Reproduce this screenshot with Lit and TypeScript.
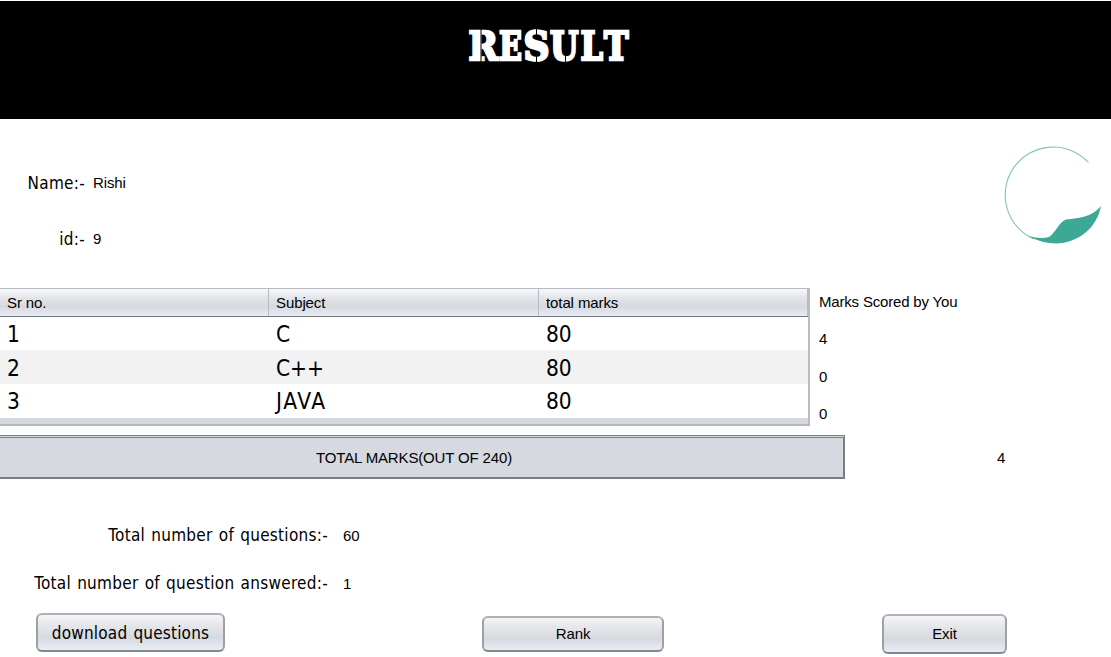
import { LitElement, html, css, svg } from "lit";
import { customElement } from "lit/decorators.js";

// Each heading letter: glyph, left edge, drawn width.
const LETTERS: [string, number, number][] = [
  ["R", 1.5, 29.5],
  ["E", 32, 23],
  ["S", 56.5, 26],
  ["U", 83, 28.5],
  ["L", 113.5, 22.5],
  ["T", 137, 24.5],
];

@customElement("app-root")
export class AppRoot extends LitElement {
  static styles = css`
    :host {
      display: block;
      box-sizing: border-box;
      width: 1111px;
      height: 657px;
      padding-top: 1px;
      overflow: hidden;
      background: #fff;
      color: #000;
      font: 15px/20px "Liberation Sans", Arial, sans-serif;
      white-space: nowrap;
    }
    * { box-sizing: border-box; }
    .banner { height: 118px; background: #000; padding: 22px 0 0 467px; }
    .title { display: block; font: bold 39.5px "DejaVu Serif", serif; }
    .tahoma {
      font-family: "DejaVu Sans Condensed", "DejaVu Sans", sans-serif;
      font-stretch: condensed;
      font-size: 17px;
      letter-spacing: 0.28px;
      word-spacing: 1px;
    }
    .info { display: flex; justify-content: space-between; height: 169px; }
    .person { padding-top: 54px; }
    .line { display: grid; grid-template-columns: 85px auto; column-gap: 8px; height: 56px; }
    .line > :first-child, .count > :first-child { justify-self: end; }
    .line > :last-child { letter-spacing: -0.1px; }
    .logo { margin: 20px 6px 0 0; }
    .marks { display: flex; height: 147px; }
    .table {
      width: 810px; height: 138px; background: #d6d9df;
      border: 2px solid #b9bcc2; border-left: 0; border-top-color: #b7bac0;
      border-top-width: 1px; border-bottom-color: #b4b7bd;
    }
    .row { display: grid; grid-template-columns: 269px 270px 1fr; height: 34px; background: #fff; }
    .row > span { padding-left: 7px; line-height: 35px; font-size: 22.5px; letter-spacing: -0.1px; }
    .row:nth-child(2) { height: 33px; }
    .row:nth-child(3) { background: #f2f2f2; }
    .row:nth-child(3) > span { line-height: 37px; }
    .row:nth-child(4) > span { line-height: 35px; }
    .row:nth-child(4) > .code { letter-spacing: 1.6px; }
    .row.head {
      height: 28px; border-bottom: 1px solid #747980;
      background: linear-gradient(#f7f8fa 0, #e2e4e9 35%, #d6d9df 65%, #e9ecf3 100%);
    }
    .head > span { font-size: 15px; line-height: 27px; border-right: 1px solid #b8bbc1; letter-spacing: -0.1px; }
    .scores { padding: 4px 0 0 9px; letter-spacing: -0.18px; }
    .scores > div { height: 37.4px; }
    .total { display: flex; height: 44px; }
    .sum {
      width: 845px; border: 3px double #7b7e7d; border-width: 3px 2px 2px 0;
      border-right-style: solid; border-bottom-style: solid;
      background: #d6d9df; padding: 10px 0 0 316px; letter-spacing: -0.15px;
    }
    .value { padding: 13px 0 0 152px; }
    .counts { padding-top: 46px; height: 134px; }
    .count { display: grid; grid-template-columns: 328px auto; column-gap: 15px; height: 48px; }
    .count > :last-child { padding-top: 1px; }
    .actions { display: flex; align-items: flex-start; }
    button {
      margin: 0; padding: 0; color: #000; font: inherit; letter-spacing: -0.1px;
      border: 2px solid #9da0a6;
      border-top-color: #b0b2b7; border-bottom-color: #84878d; border-radius: 6px;
      background: linear-gradient(#f4f5f7 0, #e4e6ea 30%, #d6d9df 65%, #e9edf5 100%);
    }
    button.download {
      width: 189px; height: 39px; margin-left: 36px;
      font-family: "DejaVu Sans Condensed", "DejaVu Sans", sans-serif;
      font-stretch: condensed; font-size: 17px; letter-spacing: 0.2px; word-spacing: 1px;
    }
    .rank { width: 182px; height: 36px; margin: 3px 0 0 257px; }
    .exit { width: 125px; height: 40px; margin: 1px 0 0 218px; }
  `;

  render() {
    const rows = [["1", "C", "80"], ["2", "C++", "80"], ["3", "JAVA", "80"]];
    return html`
      <div class="banner"><svg class="title" width="166" height="50" aria-label="RESULT">
        ${LETTERS.map(([c, x, w]) => svg`<text x=${x} y="37" textLength=${w} lengthAdjust="spacingAndGlyphs"
          fill="#fff" stroke="#fff" stroke-width="2.6">${c}</text>`)}
        <path d="M14 5V40M69.5 5V12M69.5 33V41M98.5 33V41" stroke="#000" stroke-width="1"/>
      </svg></div>
      <div class="info">
        <div class="person">
          <div class="line"><span class="tahoma">Name:-</span><span>Rishi</span></div>
          <div class="line"><span class="tahoma">id:-</span><span>9</span></div>
        </div>
        <svg class="logo" width="110" height="110" viewBox="995 139 110 110">
          <path d="M1088.5 162.5A48 48 0 1 0 1034 239" fill="none" stroke="#82c6b5" stroke-width="1.1"/>
          <path d="M1028 236Q1041 239.5 1049 237C1057 231 1059 222 1066 219.5C1080 218 1092 217 1101 206C1097 228 1078 243 1056 243.5Q1042 243.5 1028 236Z" fill="#3da994"/>
        </svg>
      </div>
      <div class="marks">
        <div class="table">
          <div class="row head"><span>Sr no.</span><span>Subject</span><span>total marks</span></div>
          ${rows.map((r) => html`<div class="row">${r.map((v, i) => html`<span class="tahoma ${i === 1 ? "code" : ""}">${v}</span>`)}</div>`)}
        </div>
        <div class="scores"><div>Marks Scored by You</div><div>4</div><div>0</div><div>0</div></div>
      </div>
      <div class="total"><div class="sum">TOTAL MARKS(OUT OF 240)</div><div class="value">4</div></div>
      <div class="counts">
        <div class="count"><span class="tahoma">Total number of questions:-</span><span>60</span></div>
        <div class="count"><span class="tahoma">Total number of question answered:-</span><span>1</span></div>
      </div>
      <div class="actions">
        <button class="download">download questions</button>
        <button class="rank">Rank</button>
        <button class="exit">Exit</button>
      </div>`;
  }
}
